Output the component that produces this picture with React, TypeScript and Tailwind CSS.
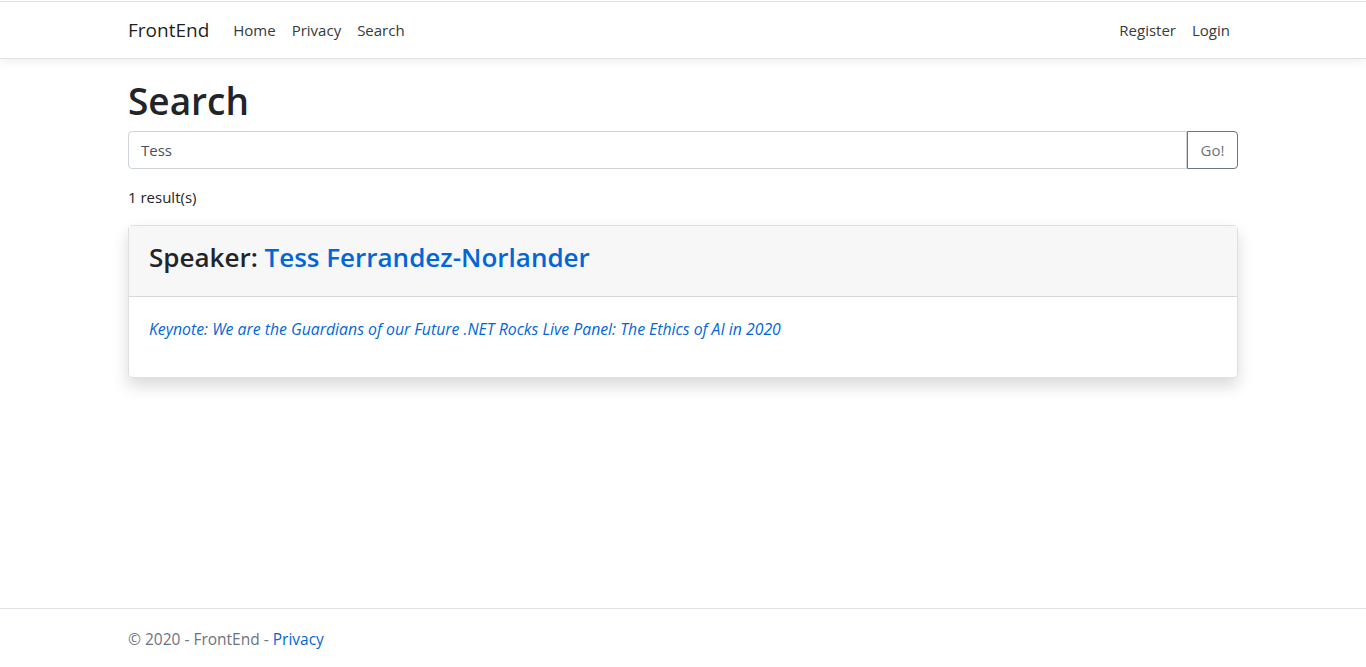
import * as React from "react";

const font = { fontFamily: '"Open Sans", "Noto Sans", sans-serif' };

export default function App() {
  const [query, setQuery] = React.useState("Tess");

  return (
    <div className="min-h-screen flex flex-col bg-white text-[#212529]" style={font}>
      <header className="mt-px border-t border-[#dee2e6] bg-white border-b shadow-[0_0.25rem_0.5rem_rgba(0,0,0,0.05)] mb-4">
        <nav className="w-[1140px] mx-auto px-[15px] py-2 flex items-center">
          <a href="#" className="text-[19px] leading-[30px] text-black/90 mr-4 py-[5px]">
            FrontEnd
          </a>
          <div className="flex items-center flex-1">
            <a href="#" className="px-2 py-2 text-[15px] leading-6 text-[#343a40]">Home</a>
            <a href="#" className="px-2 py-2 text-[15px] leading-6 text-[#343a40]">Privacy</a>
            <a href="#" className="px-2 py-2 text-[15px] leading-6 text-[#343a40]">Search</a>
          </div>
          <div className="flex items-center">
            <a href="#" className="px-2 py-2 text-[15px] leading-6 text-[#343a40]">Register</a>
            <a href="#" className="px-2 py-2 text-[15px] leading-6 text-[#343a40]">Login</a>
          </div>
        </nav>
      </header>

      <main className="w-[1140px] mx-auto px-[15px] pb-8">
        <h1 className="text-[37px] leading-[48px] font-semibold pt-[2px] mb-[6px]">Search</h1>
        <div className="flex">
          <input
            value={query}
            onChange={(e) => setQuery(e.target.value)}
            className="flex-1 h-[38px] border border-[#ced4da] rounded-l px-3 text-[15px] text-[#495057] outline-none"
          />
          <button className="h-[38px] w-[51px] border border-[#6c757d] rounded-r text-[15px] text-[#6c757d]">
            Go!
          </button>
        </div>
        <p className="mt-4 mb-4 text-[15px] leading-6">1 result(s)</p>

        <div className="border border-black/[0.125] rounded shadow-[0_0.5rem_1rem_rgba(0,0,0,0.15)]">
          <div className="bg-[#f7f7f7] border-b border-black/[0.125] px-5 pt-3 pb-3">
            <h2 className="text-[26px] leading-[38px] font-semibold mb-2">
              Speaker: <a href="#" className="text-[#0366d6]">Tess Ferrandez-Norlander</a>
            </h2>
          </div>
          <div className="p-5">
            <p className="mb-4 text-[15.8px] leading-6 italic text-[#0366d6]">
              <a href="#">Keynote: We are the Guardians of our Future</a>{" "}
              <a href="#">.NET Rocks Live Panel: The Ethics of AI in 2020</a>
            </p>
          </div>
        </div>
      </main>

      <footer className="mt-auto border-t border-[#dee2e6] text-[#6c757d] pt-1 pb-[2px]">
        <div className="w-[1140px] mx-auto px-[15px] leading-[52px] text-[15.5px]">
          © 2020 - FrontEnd - <a href="#" className="text-[#0366d6]">Privacy</a>
        </div>
      </footer>
    </div>
  );
}
